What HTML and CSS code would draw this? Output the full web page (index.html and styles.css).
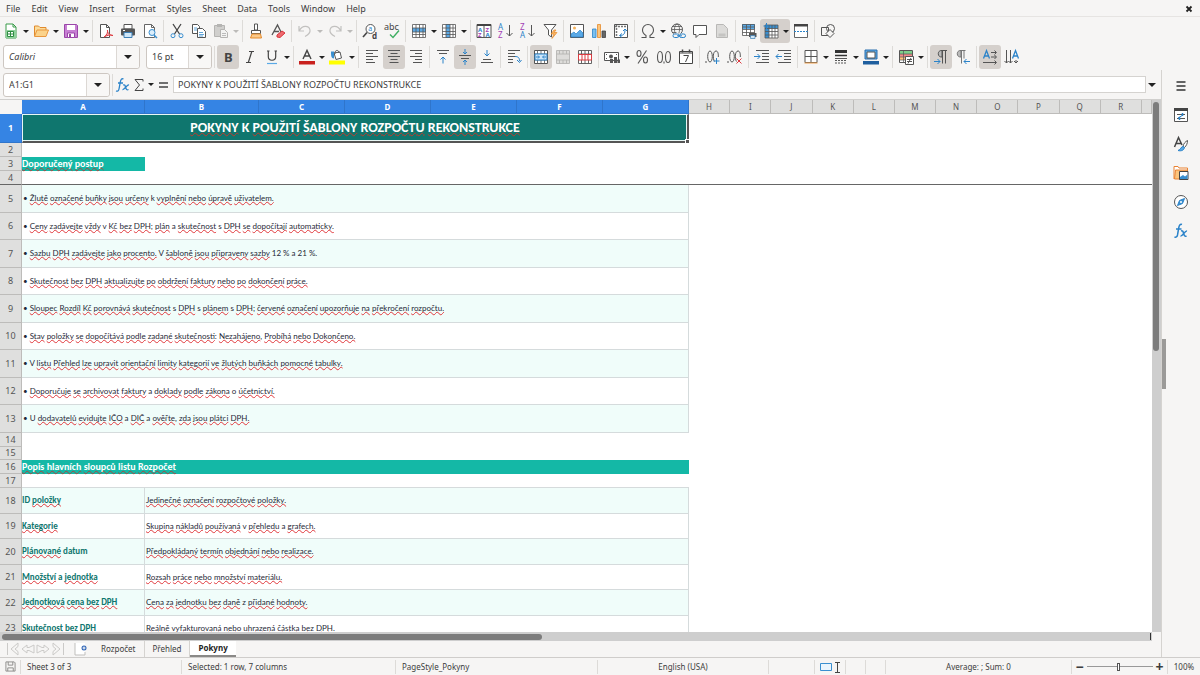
FILE: index.html
```html
<!DOCTYPE html>
<html lang="cs">
<head>
<meta charset="utf-8">
<title>Pokyny</title>
<link rel="stylesheet" href="styles.css">
</head>
<body>
<nav class="menubar">
  <button>File</button><button>Edit</button><button>View</button><button>Insert</button><button>Format</button><button>Styles</button><button>Sheet</button><button>Data</button><button>Tools</button><button>Window</button><button>Help</button>
  <button class="close" aria-label="Close document"><svg viewBox="0 0 8 8"><path d="M1.500 1.500l5 5M6.500 1.500l-5 5" stroke="#222" stroke-width="1.800"/></svg></button>
</nav>

<div class="toolbar" role="toolbar" aria-label="Standard">
  <button class="tb" aria-label="New"><svg viewBox="0 0 16 16"><path d="M3 1h7l3 3v11H3z" fill="#fff" stroke="#3a9b4a"/><path d="M10 1v3h3" fill="none" stroke="#3a9b4a"/><path d="M3 7h10v8H3z" fill="#8fd19b"/><path d="M4.500 8.500h6v5h-6zM4.500 11h6M7.500 8.500v5" fill="#fff" stroke="#2f8d42"/></svg></button><button class="dd" aria-label="New options"></button>
  <button class="tb" aria-label="Open"><svg viewBox="0 0 16 16"><path d="M1.500 13V3h4l1.500 1.500h6V7" fill="#fbdc9a" stroke="#e08a2e"/><path d="M1.500 13.500L4 7h11.500L13 13.500z" fill="#fbd38b" stroke="#e9973e"/></svg></button><button class="dd" aria-label="Open options"></button>
  <button class="tb" aria-label="Save"><svg viewBox="0 0 16 16"><path d="M1.500 1.500h12l1 1v12h-13z" fill="#c77fd3" stroke="#9a45a8"/><path d="M4 2h8v5H4z" fill="#fff"/><path d="M4.500 10h7v4.500h-7z" fill="#fff" stroke="#9a45a8"/><path d="M6 11h2v3H6z" fill="#9a45a8"/></svg></button><button class="dd" aria-label="Save options"></button>
  <i class="sep"></i>
  <button class="tb" aria-label="Export as PDF"><svg viewBox="0 0 16 16"><path d="M2.500 1.500h6l3 3v10h-9z" fill="#fff" stroke="#555"/><path d="M8.500 1.500v3h3" fill="none" stroke="#555"/><path d="M6 14c3-2 4-5 3.500-7C9 9 11 12 15 12.500c-3-.8-6-.3-9 1.500z" fill="#f4a9aa" stroke="#dd3c42"/></svg></button>
  <button class="tb" aria-label="Print"><svg viewBox="0 0 16 16"><path d="M4 1.500h8V6H4z" fill="#fff" stroke="#555"/><rect x="1" y="5.500" width="14" height="7" rx="1" fill="#555"/><path d="M4 9.500h8v5H4z" fill="#cfe6f7" stroke="#3d7fb5"/><path d="M3 7.500h2" stroke="#fff"/></svg></button>
  <button class="tb" aria-label="Print preview"><svg viewBox="0 0 16 16"><path d="M2.500 1.500h7l3 3v10h-10z" fill="#fff" stroke="#666"/><path d="M9.500 1.500v3h3" fill="none" stroke="#666"/><circle cx="10" cy="9.500" r="3" fill="#dceefb" stroke="#3a8fd0"/><path d="M12 12l3 3" stroke="#3a8fd0" stroke-width="1.500"/></svg></button>
  <i class="sep"></i>
  <button class="tb" aria-label="Cut"><svg viewBox="0 0 16 16" fill="none"><path d="M4 1l6.500 10M12 1L5.500 11" stroke="#444" stroke-width="1.300"/><circle cx="4" cy="12.700" r="2" stroke="#3a8fd0"/><circle cx="12" cy="12.700" r="2" stroke="#3a8fd0"/></svg></button>
  <button class="tb" aria-label="Copy"><svg viewBox="0 0 16 16"><path d="M1.500 1.500h5l2 2v7h-7z" fill="#fff" stroke="#555"/><path d="M6.500 5.500h5l3 3v6h-8z" fill="#fff" stroke="#555"/><path d="M3 5h3M3 7h3M8 9.500h4M8 11.500h5M8 13h4" stroke="#3a8fd0" stroke-width=".8"/></svg></button>
  <button class="tb" aria-label="Paste" disabled><svg viewBox="0 0 16 16"><path d="M1.500 2.500h10v11h-10z" fill="#d0cfcd" stroke="#b5b4b2"/><path d="M4 1h5v3H4z" fill="#b5b4b2"/><path d="M7.500 6.500h4l3 3v5h-7z" fill="#f3f3f2" stroke="#b5b4b2"/><path d="M9 10.500h4M9 12.500h4" stroke="#bbb"/></svg></button><button class="dd off" aria-label="Paste options"></button>
  <i class="sep"></i>
  <button class="tb" aria-label="Clone formatting"><svg viewBox="0 0 16 16"><path d="M6.500 1h3v6h-3z" fill="#fff" stroke="#555"/><path d="M3.500 7.500h9v3h-9z" fill="#fff" stroke="#555"/><path d="M4 11h8.500l1 4H2.500z" fill="#fbc98a" stroke="#e58a2b"/></svg></button>
  <button class="tb" aria-label="Clear formatting"><svg viewBox="0 0 16 16"><path d="M2 12L7.500 2 11 9M4 8.500h5" fill="none" stroke="#555" stroke-width="1.300"/><path d="M7 12l5-4 3 2-5 4.500-3-.5z" fill="#ee6b70" stroke="#d9343b"/></svg></button>
  <i class="sep"></i>
  <button class="tb" aria-label="Undo" disabled><svg viewBox="0 0 16 16"><path d="M2 3v5h5M2.500 7.500C5 2 12 2 13 7c.5 3-2 5-5 6.500" fill="none" stroke="#c2c1bf" stroke-width="1.200"/></svg></button><button class="dd off" aria-label="Undo list"></button>
  <button class="tb" aria-label="Redo" disabled><svg viewBox="0 0 16 16"><path d="M14 3v5H9M13.500 7.500C11 2 4 2 3 7c-.5 3 2 5 5 6.500" fill="none" stroke="#c2c1bf" stroke-width="1.200"/></svg></button><button class="dd off" aria-label="Redo list"></button>
  <i class="sep"></i>
  <button class="tb" aria-label="Find and replace"><svg viewBox="0 0 16 16"><circle cx="8.500" cy="6" r="4.500" fill="#fff" stroke="#555"/><path d="M5 9.500L1 14" stroke="#444" stroke-width="1.600"/><text x="6.300" y="8.200" font-size="7" fill="#2b83c9">a</text><text x="10" y="15.500" font-size="8" font-weight="700" fill="#444">d</text></svg></button>
  <button class="tb" aria-label="Spelling"><svg viewBox="0 0 16 16"><text x="0" y="7" font-size="9" fill="#444">abc</text><path d="M6 11.500l3 3L15 7.500" fill="none" stroke="#3fae62" stroke-width="1.400"/></svg></button>
  <i class="sep"></i>
  <button class="tb" aria-label="Row"><svg viewBox="0 0 16 16"><path d="M1 1h14v14H1z" fill="#fff"/><path d="M1 5h14v4H1z" fill="#5aa9e6"/><path d="M1.500 1.500h13v13h-13zM1.500 5h13M1.500 9h13M1.500 11.500h13M5 1.500v13M8.500 1.500v13M12 1.500v13" fill="none" stroke="#555" stroke-width=".8"/></svg></button><button class="dd" aria-label="Row options"></button>
  <button class="tb" aria-label="Column"><svg viewBox="0 0 16 16"><path d="M1 1h14v14H1z" fill="#fff"/><path d="M5 1h4v14H5z" fill="#5aa9e6"/><path d="M1.500 1.500h13v13h-13zM1.500 5h13M1.500 8.500h13M1.500 11.500h13M5 1.500v13M9 1.500v13M12 1.500v13" fill="none" stroke="#555" stroke-width=".8"/></svg></button><button class="dd" aria-label="Column options"></button>
  <i class="sep"></i>
  <button class="tb" aria-label="Sort"><svg viewBox="0 0 16 16"><path d="M1 1.500h14v13H1zM8 1.500v13" fill="#fff" stroke="#555"/><path d="M1 1h14v2H1z" fill="#444"/><g font-size="6" font-weight="700"><text x="2" y="8.500" fill="#2b83c9">A</text><text x="2" y="14" fill="#a33fb5">Z</text><text x="9.500" y="8.500" fill="#a33fb5">Z</text><text x="9.500" y="14" fill="#2b83c9">A</text></g></svg></button>
  <button class="tb" aria-label="Sort ascending"><svg viewBox="0 0 16 16"><g font-size="8"><text x="0" y="7" fill="#2b83c9">A</text><text x="0" y="15" fill="#a33fb5">Z</text></g><path d="M11.500 2v11M8.500 10l3 3 3-3" fill="none" stroke="#555"/></svg></button>
  <button class="tb" aria-label="Sort descending"><svg viewBox="0 0 16 16"><g font-size="8"><text x="0" y="7" fill="#a33fb5">Z</text><text x="0" y="15" fill="#2b83c9">A</text></g><path d="M11.500 2v11M8.500 10l3 3 3-3" fill="none" stroke="#555"/></svg></button>
  <button class="tb" aria-label="AutoFilter"><svg viewBox="0 0 16 16"><path d="M2 1.500h12L9.500 7v7L6.500 12V7z" fill="#fff" stroke="#555"/><path d="M12 7l-3 4h3l-2 4.500 5-6h-3l2-2.500z" fill="#fbb867" stroke="#e58a2b" stroke-width=".7"/></svg></button>
  <i class="sep"></i>
  <button class="tb" aria-label="Insert image"><svg viewBox="0 0 16 16"><path d="M1.500 1.500h13v13h-13z" fill="#fff" stroke="#555"/><path d="M2 14V11l3-2 2 2 4-4 3 3v4z" fill="#5aa9e6" stroke="#2b83c9" stroke-width=".7"/><circle cx="5.500" cy="5" r="1.500" fill="#f6b35c"/></svg></button>
  <button class="tb" aria-label="Insert chart"><svg viewBox="0 0 16 16"><path d="M1.500 6h3.500v8.500H1.500z" fill="#7cc0ee" stroke="#2b83c9" stroke-width=".8"/><path d="M6.500 1.500h3v13h-3z" fill="#fbc47d" stroke="#e58a2b" stroke-width=".8"/><path d="M11 8h3.500v6.500H11z" fill="#666" stroke="#444" stroke-width=".8"/></svg></button>
  <button class="tb" aria-label="Pivot table"><svg viewBox="0 0 16 16"><path d="M1.500 1.500h13v13h-13z" fill="#fff" stroke="#555"/><path d="M2 3.500h12M3.500 2v12" stroke="#777" stroke-width="1.500" stroke-dasharray="2 1"/><path d="M7 12.500c4 0 5-2 5-6M10 8l2-2 2 2M9 10.500l-2.500 2L9 14.500" fill="none" stroke="#2b83c9"/></svg></button>
  <i class="sep"></i>
  <button class="tb" aria-label="Special character"><svg viewBox="0 0 16 16"><path d="M1.500 14.500h4.500v-2C3.500 11 2.500 9.500 2.500 7a5.500 5.500 0 0 1 11 0c0 2.500-1 4-3.500 5.500v2h4.500" fill="none" stroke="#555" stroke-width="1.100"/></svg></button><button class="dd" aria-label="Special characters list"></button>
  <button class="tb" aria-label="Hyperlink"><svg viewBox="0 0 16 16" fill="none"><circle cx="7" cy="6.500" r="5.500" stroke="#555"/><ellipse cx="7" cy="6.500" rx="2.500" ry="5.500" stroke="#555" stroke-width=".8"/><path d="M1.500 6.500h11M2.500 3.500h9M2.500 9.500h4" stroke="#555" stroke-width=".8"/><path d="M3.500 10.500h11v4h-11z" fill="#f6f5f4"/><rect x="3" y="11" width="6" height="3.500" rx="1.700" stroke="#2b83c9"/><rect x="9.500" y="11" width="6" height="3.500" rx="1.700" stroke="#2b83c9"/><path d="M7 12.800h5" stroke="#2b83c9"/></svg></button>
  <button class="tb" aria-label="Comment"><svg viewBox="0 0 16 16"><path d="M1.500 2.500h13v9H7L4 14.500v-3H1.500z" fill="#fff" stroke="#555"/></svg></button>
  <button class="tb" aria-label="Headers and footers" disabled><svg viewBox="0 0 16 16"><path d="M2.500 1.500h7l4 4v9h-11z" fill="#dcdbd9" stroke="#b9b8b6"/><path d="M4.500 10.500h7v3h-7z" fill="#c5c4c2"/></svg></button>
  <i class="sep"></i>
  <button class="tb" aria-label="Print area"><svg viewBox="0 0 16 16"><path d="M1.500 1.500h12v11h-12z" fill="#fff"/><path d="M1 1h13v5H1z" fill="#5aa9e6"/><path d="M1.500 1.500h12v11h-12zM1.500 4h12M1.500 6.500h12M1.500 9.500h12M5.500 1.500v11M9.500 1.500v11" fill="none" stroke="#555" stroke-width=".8"/><path d="M8 10h7.500v4H8z" fill="#555"/><path d="M9.500 12.500h4.500v3H9.500z" fill="#cfe6f7" stroke="#3d7fb5" stroke-width=".7"/></svg></button>
  <span class="split"><button class="tb" aria-label="Freeze rows and columns"><svg viewBox="0 0 16 16"><path d="M2 2h13v13H2z" fill="#fff"/><path d="M2 2h13v3.500H2zM2 2h4v13H2z" fill="#3a8fd0"/><path d="M2 5.500h13M6 2v13M2 8.500h13M2 12h13M9 2v13M12 2v13M2 2h13v13H2z" fill="none" stroke="#555" stroke-width=".8"/><path d="M3.500 0v6M.5 3h6" stroke="#2b83c9"/></svg></button><button class="dd" aria-label="Freeze options"></button></span>
  <button class="tb" aria-label="Split window"><svg viewBox="0 0 16 16"><path d="M1.500 2.500h13v12h-13z" fill="#fff" stroke="#666"/><path d="M1 1h14v2.500H1z" fill="#444"/><path d="M1 8.500h14" stroke="#2b83c9" stroke-dasharray="2 1"/></svg></button>
  <i class="sep"></i>
  <button class="tb" aria-label="Draw functions"><svg viewBox="0 0 16 16" fill="none" stroke="#555"><path d="M1.500 4.500h7v8h-7z"/><circle cx="10.500" cy="5.500" r="4"/><path d="M10 6.500l4 4-4 4-4-4z" fill="#f6f5f4"/></svg></button>
</div>

<div class="toolbar second" role="toolbar" aria-label="Formatting">
  <div class="combo font"><input class="italic" aria-label="Font name" value="Calibri"><button class="drop" aria-label="Font list"></button></div>
  <div class="combo size"><input aria-label="Font size" value="16 pt"><button class="drop" aria-label="Size list"></button></div>
  <i class="sep"></i>
  <button class="tb on" aria-label="Bold"><svg viewBox="0 0 16 16"><text x="4" y="12.500" font-size="13" font-weight="700" fill="#444">B</text></svg></button>
  <button class="tb" aria-label="Italic"><svg viewBox="0 0 16 16"><path d="M7 2.500h5M4 13.500h5M9.800 2.500l-3.500 11" stroke="#444" stroke-width="1.200"/></svg></button>
  <button class="tb" aria-label="Underline"><svg viewBox="0 0 16 16"><path d="M3 2h2.500M10.500 2H13M4.300 2v5.500c0 5 7.400 5 7.400 0V2" fill="none" stroke="#444" stroke-width="1.200"/><path d="M3 14.500h10" stroke="#5aa9e6" stroke-width="1.200"/></svg></button><button class="dd" aria-label="Underline styles"></button>
  <i class="sep"></i>
  <button class="tb" aria-label="Font color"><svg viewBox="0 0 16 16"><path d="M4 10L8 1.500l4 8.500M5.500 7h5" fill="none" stroke="#444" stroke-width="1.400"/><path d="M0 12h16v3.500H0z" fill="#c9211e"/></svg></button><button class="dd" aria-label="Font colors"></button>
  <button class="tb" aria-label="Highlighting"><svg viewBox="0 0 16 16"><path d="M5 4l6-1 1.500 6L7 10.500z" fill="#fff" stroke="#555"/><path d="M6 5c-1-4 4-5 4-1" fill="none" stroke="#555"/><path d="M2 2.500h3v7c-3 0-3-3-3-7z" fill="#3a8fd0"/><path d="M0 11.500h16v4H0z" fill="#ffff00"/></svg></button><button class="dd" aria-label="Highlight colors"></button>
  <i class="sep"></i>
  <button class="tb" aria-label="Align left"><svg viewBox="0 0 16 16" stroke="#555" stroke-width="1.100"><path d="M2 1.500h12M2 4.500h7M2 7.500h12M2 10.500h7M2 13.500h9"/></svg></button>
  <button class="tb on" aria-label="Center horizontally"><svg viewBox="0 0 16 16" stroke="#555" stroke-width="1.100"><path d="M2 1.500h12M4.500 4.500h7M2 7.500h12M4.500 10.500h7M3.500 13.500h9"/></svg></button>
  <button class="tb" aria-label="Align right"><svg viewBox="0 0 16 16" stroke="#555" stroke-width="1.100"><path d="M2 1.500h12M7 4.500h7M2 7.500h12M7 10.500h7M5 13.500h9"/></svg></button>
  <i class="sep"></i>
  <button class="tb" aria-label="Align top"><svg viewBox="0 0 16 16" fill="none"><path d="M2 1.500h12M4 4.500h8" stroke="#555" stroke-width="1.100"/><path d="M8 14.500V8M5.500 10.500L8 8l2.500 2.500" stroke="#2b83c9"/></svg></button>
  <button class="tb on" aria-label="Center vertically"><svg viewBox="0 0 16 16" fill="none"><path d="M2 6.500h12M4 9.500h8" stroke="#555" stroke-width="1.100"/><path d="M8 0v5M6 3l2 2 2-2M8 16v-5M6 13l2-2 2 2" stroke="#2b83c9"/></svg></button>
  <button class="tb" aria-label="Align bottom"><svg viewBox="0 0 16 16" fill="none"><path d="M4 10.500h8M2 13.500h12" stroke="#555" stroke-width="1.100"/><path d="M8 1v6M5.500 4.500L8 7l2.500-2.500" stroke="#2b83c9"/></svg></button>
  <i class="sep"></i>
  <button class="tb" aria-label="Wrap text"><svg viewBox="0 0 16 16" fill="none"><path d="M2 1.500h12M2 4.500h7M2 7.500h8M2 10.500h5M2 13.500h5" stroke="#555" stroke-width="1.100"/><path d="M9 7.500c3 0 4.500 1 4.500 4.500M11 11l2.500 2.500L15.500 11" stroke="#2b83c9"/></svg></button>
  <i class="sep"></i>
  <button class="tb on" aria-label="Merge and center"><svg viewBox="0 0 16 16" fill="none"><path d="M1.500 1.500h13v13h-13z" fill="#fff" stroke="#555"/><path d="M1.500 5h13M1.500 11h13M4.500 1.500V5M8 1.500V5M11.500 1.500V5M4.500 11v3.500M8 11v3.500M11.500 11v3.500" stroke="#555" stroke-width=".8"/><path d="M2 5h12v6H2z" fill="#cde6fa" stroke="#2b83c9"/><path d="M3 8h3M10 8h3M5 6.500L6.500 8 5 9.500M11 6.500L9.500 8 11 9.500" stroke="#2b83c9"/></svg></button>
  <button class="tb" aria-label="Merge cells" disabled><svg viewBox="0 0 16 16"><path d="M1.500 1.500h13v13h-13zM1.500 5h13M1.500 11h13M4.500 1.500V5M8 1.500V5M11.500 1.500V5M4.500 11v3.500M8 11v3.500M11.500 11v3.500" fill="#dddcda" stroke="#b5b4b2" stroke-width=".9"/></svg></button>
  <button class="tb" aria-label="Split cells"><svg viewBox="0 0 16 16" fill="none"><path d="M1.500 1.500h13v13h-13zM1.500 5h13M4.500 1.500V5M8 1.500V5M11.500 1.500V5M4.500 11v3.500M8 11v3.500M11.500 11v3.500" fill="#fff" stroke="#555" stroke-width=".9"/><path d="M1.500 5.500h13v5.500h-13zM5 5v6M8 5v6M11 5v6" stroke="#dd3c42"/></svg></button>
  <i class="sep"></i>
  <button class="tb" aria-label="Currency"><svg viewBox="0 0 16 16"><path d="M.500 3.500h14v8H.500z" fill="#fff" stroke="#555"/><circle cx="7" cy="7.500" r="2" fill="#555"/><path d="M2 5.500h1M12 5.500h1M2 9.500h1" stroke="#555"/><path d="M6 10h3v4H6zM10 8h3v6h-3zM13.500 10.500H16V14h-2.500z" fill="#555"/></svg></button><button class="dd" aria-label="Currencies"></button>
  <button class="tb" aria-label="Percent"><svg viewBox="0 0 16 16" fill="none" stroke="#555" stroke-width="1.100"><ellipse cx="5" cy="4.500" rx="2" ry="3"/><ellipse cx="11.500" cy="11" rx="2" ry="3"/><path d="M12.500 1.500L4 14.500"/></svg></button>
  <button class="tb" aria-label="Number"><svg viewBox="0 0 16 16" fill="none" stroke="#555" stroke-width="1.100"><ellipse cx="4" cy="8" rx="2.500" ry="5.500"/><ellipse cx="12" cy="8" rx="2.500" ry="5.500"/><path d="M8 12.500v2"/></svg></button>
  <button class="tb" aria-label="Date"><svg viewBox="0 0 16 16" fill="none" stroke="#444"><path d="M1.500 2.500h13v12h-13zM2 4h12" fill="#fff"/><path d="M4.500.5v3M11.500.5v3" stroke-width="1.500"/><path d="M5.500 6.500h5L7.500 13"/></svg></button>
  <i class="sep"></i>
  <button class="tb" aria-label="Add decimal place"><svg viewBox="0 0 16 16" fill="none" stroke="#555"><path d="M1 12v2"/><ellipse cx="5" cy="7.500" rx="2.300" ry="5.500"/><path d="M9.500 12.500c-2-3-1.500-10.500 1.500-10.500 2 0 2.500 3 2.300 6"/><path d="M11.500 9v6M8.500 12h6" stroke="#2b83c9"/></svg></button>
  <button class="tb" aria-label="Delete decimal place"><svg viewBox="0 0 16 16" fill="none" stroke="#555"><path d="M1 12v2"/><ellipse cx="5" cy="7.500" rx="2.300" ry="5.500"/><path d="M9.500 12.500c-2-3-1.500-10.500 1.500-10.500 2 0 2.500 3 2.300 6"/><path d="M9.500 9.500l5 5M14.500 9.500l-5 5" stroke="#dd3c42"/></svg></button>
  <i class="sep"></i>
  <button class="tb" aria-label="Increase indent"><svg viewBox="0 0 16 16" fill="none"><path d="M2 1.500h13M8 4.500h7M8 7.500h7M8 10.500h7M2 13.500h13" stroke="#555" stroke-width="1.100"/><path d="M0 7.500h6M3.500 5L6 7.500 3.500 10" stroke="#2b83c9"/></svg></button>
  <button class="tb" aria-label="Decrease indent"><svg viewBox="0 0 16 16" fill="none"><path d="M2 1.500h13M8 4.500h7M8 7.500h7M8 10.500h7M2 13.500h13" stroke="#555" stroke-width="1.100"/><path d="M0 7.500h6M2.500 5L0 7.500 2.500 10" stroke="#2b83c9"/></svg></button>
  <i class="sep"></i>
  <button class="tb" aria-label="Borders"><svg viewBox="0 0 16 16"><path d="M2 1.500h12v12H2zM8 1.500v12M2 7.500h12" fill="#fff" stroke="#555"/><path d="M1.500 14h13" stroke="#f0a04b"/></svg></button><button class="dd" aria-label="Border styles"></button>
  <button class="tb" aria-label="Border style"><svg viewBox="0 0 16 16"><path d="M2 2.500h12" stroke="#333" stroke-width="3"/><path d="M2 6.500h12" stroke="#333" stroke-width="1.500"/><path d="M2 9.500h12" stroke="#555"/><path d="M2 11.500h12M2 14h12" stroke="#555" stroke-dasharray="2 1"/></svg></button><button class="dd" aria-label="Line styles"></button>
  <button class="tb" aria-label="Border color"><svg viewBox="0 0 16 16"><path d="M2 1h12v9H2z" fill="#5aa9e6" stroke="#2b6fae"/><path d="M4 3h8v6H4z" fill="#fff" stroke="#555"/><path d="M0 12h16v3.500H0z" fill="#1f5f9f"/></svg></button><button class="dd" aria-label="Border colors"></button>
  <i class="sep"></i>
  <button class="tb" aria-label="Conditional formatting"><svg viewBox="0 0 16 16"><path d="M1.500 1.500h13v12h-13z" fill="#fff" stroke="#555"/><path d="M2 2h12v3H2z" fill="#7ccf8a"/><path d="M2 5h12v3H2z" fill="#f08a8a"/><path d="M2 8h12v3H2z" fill="#fbc47d"/><path d="M5.500 1.500v12M1.500 5h13M1.500 8h13M1.500 11h13" stroke="#555" stroke-width=".7"/><path d="M7.500 7.500h8v8h-8z" fill="#fff" stroke="#555"/><path d="M9 10.500h5M9 12.500h5M13 9l-3 5.500" stroke="#444" stroke-width=".9"/></svg></button><button class="dd" aria-label="Conditional options"></button>
  <i class="sep"></i>
  <button class="tb on" aria-label="Left to right"><svg viewBox="0 0 16 16" fill="none"><path d="M8.500 1.500h5.500M9.500 1.500v13M12.500 1.500v13" stroke="#555"/><path d="M9 1.500C4 1 4 8.500 9 8z" fill="#bbb" stroke="#555"/><path d="M1 12.500h6M4.500 10L7 12.500 4.500 15" stroke="#2b83c9"/></svg></button>
  <button class="tb" aria-label="Right to left"><svg viewBox="0 0 16 16" fill="none"><path d="M5 1.500h5.500M6.500 1.500v13M9 1.500v8" stroke="#777"/><path d="M6 1.500C1 1 1 8.500 6 8z" fill="#bbb" stroke="#777"/><path d="M15 12.500H9M11.500 10L9 12.500l2.500 2.500" stroke="#2b83c9"/></svg></button>
  <i class="sep"></i>
  <button class="tb on" aria-label="Text left to right"><svg viewBox="0 0 16 16" fill="none"><path d="M1.500 9.500L4.500 1.500l3 8M2.500 7h4" stroke="#2b83c9" stroke-width="1.300"/><path d="M9 3.500h5M9 8h5M1 13.500h13M12.500 1.500l2 2-2 2M12.500 6l2 2-2 2M12.500 11.500l2 2-2 2" stroke="#555"/></svg></button>
  <button class="tb" aria-label="Text top to bottom"><svg viewBox="0 0 16 16" fill="none"><path d="M8.500 9.500l3-8 3 8M9.500 7h4" stroke="#2b83c9" stroke-width="1.300"/><path d="M2.500 1v13M6.500 1v13M.5 12l2 2 2-2M4.500 12l2 2 2-2M12 11v3M10 12l2 2 2-2" stroke="#555"/></svg></button>
</div>

<main class="work">
  <section class="doc">
    <div class="formula">
      <div class="combo name"><input aria-label="Name box" value="A1:G1"><button class="drop" aria-label="Names"></button></div>
      <i class="sep"></i>
      <button class="fb" aria-label="Function wizard"><svg viewBox="0 0 16 16" fill="none" stroke="#2b83c9" stroke-width="1.300"><path d="M8.500 2c-2-1-2.800 1-3.200 3L4 12c-.4 2-1.500 2.500-3 2M3 6h5"/><path d="M8 8c1.500-.5 2 0 2.500 2s1.200 3.500 3 2.500M14 8c-2-.5-4.500 5-6.500 4.500"/></svg></button>
      <button class="fb" aria-label="Select function"><svg viewBox="0 0 16 16" fill="none" stroke="#444"><path d="M12 4.500V2.500H4L8.500 8 4 13.500h8v-2"/></svg></button><button class="dd" aria-label="Function list"></button>
      <button class="fb" aria-label="Formula"><svg viewBox="0 0 16 16" stroke="#444" stroke-width="1.600"><path d="M4 6h9M4 10h9"/></svg></button>
      <input class="line" aria-label="Input line" value="POKYNY K POUŽITÍ ŠABLONY ROZPOČTU REKONSTRUKCE">
      <button class="drop bare" aria-label="Expand formula bar"></button>
    </div>
    <div class="view">
      <div class="clip">
        <table class="sheet">
          <colgroup><col class="cn"><col class="ca"><col class="cb"><col class="cc"><col class="cc"><col class="cc"><col class="cc"><col class="cc"><col><col><col><col><col><col><col><col><col><col><col><col class="cl"></colgroup>
          <thead><tr><th class="corner"></th><th class="sel">A</th><th class="sel">B</th><th class="sel">C</th><th class="sel">D</th><th class="sel">E</th><th class="sel">F</th><th class="sel">G</th><th>H</th><th>I</th><th>J</th><th>K</th><th>L</th><th>M</th><th>N</th><th>O</th><th>P</th><th>Q</th><th>R</th><th></th></tr></thead>
          <tbody>
            <tr class="r29"><th class="sel">1</th><td colspan="7" class="title"><u>POKYNY</u> K <u>POUŽITÍ</u> <u>ŠABLONY</u> <u>ROZPOČTU</u> <u>REKONSTRUKCE</u><i class="handle"></i></td><td colspan="12"></td></tr>
            <tr class="r14"><th>2</th><td colspan="19"></td></tr>
            <tr class="r14"><th>3</th><td class="head"><u>Doporučený</u> <u>postup</u></td><td colspan="18"></td></tr>
            <tr class="r14 freeze"><th>4</th><td colspan="19"></td></tr>
            <tr class="r28 band"><th>5</th><td colspan="7" class="cell">• <u>Žlutě</u> <u>označené</u> <u>buňky</u> <u>jsou</u> <u>určeny</u> k <u>vyplnění</u> <u>nebo</u> <u>úpravě</u> <u>uživatelem.</u></td><td colspan="12"></td></tr>
            <tr class="r27"><th>6</th><td colspan="7" class="cell">• <u>Ceny</u> <u>zadávejte</u> <u>vždy</u> v <u>Kč</u> <u>bez</u> <u>DPH</u>; <u>plán</u> a <u>skutečnost</u> s <u>DPH</u> <u>se</u> <u>dopočítají</u> <u>automaticky.</u></td><td colspan="12"></td></tr>
            <tr class="r28 band"><th>7</th><td colspan="7" class="cell">• <u>Sazbu</u> <u>DPH</u> <u>zadávejte</u> <u>jako</u> <u>procento.</u> V <u>šabloně</u> <u>jsou</u> <u>připraveny</u> <u>sazby</u> 12 % a 21 %.</td><td colspan="12"></td></tr>
            <tr class="r27"><th>8</th><td colspan="7" class="cell">• <u>Skutečnost</u> <u>bez</u> <u>DPH</u> <u>aktualizujte</u> <u>po</u> <u>obdržení</u> <u>faktury</u> <u>nebo</u> <u>po</u> <u>dokončení</u> <u>práce.</u></td><td colspan="12"></td></tr>
            <tr class="r28 band"><th>9</th><td colspan="7" class="cell">• <u>Sloupec</u> <u>Rozdíl</u> <u>Kč</u> <u>porovnává</u> <u>skutečnost</u> s <u>DPH</u> s <u>plánem</u> s <u>DPH</u>; <u>červené</u> <u>označení</u> <u>upozorňuje</u> <u>na</u> <u>překročení</u> <u>rozpočtu.</u></td><td colspan="12"></td></tr>
            <tr class="r27"><th>10</th><td colspan="7" class="cell">• <u>Stav</u> <u>položky</u> <u>se</u> <u>dopočítává</u> <u>podle</u> <u>zadané</u> <u>skutečnosti</u>: <u>Nezahájeno</u>, <u>Probíhá</u> <u>nebo</u> <u>Dokončeno.</u></td><td colspan="12"></td></tr>
            <tr class="r28 band"><th>11</th><td colspan="7" class="cell">• V <u>listu</u> <u>Přehled</u> <u>lze</u> <u>upravit</u> <u>orientační</u> <u>limity</u> <u>kategorií</u> <u>ve</u> <u>žlutých</u> <u>buňkách</u> <u>pomocné</u> <u>tabulky.</u></td><td colspan="12"></td></tr>
            <tr class="r27"><th>12</th><td colspan="7" class="cell">• <u>Doporučuje</u> <u>se</u> <u>archivovat</u> <u>faktury</u> a <u>doklady</u> <u>podle</u> <u>zákona</u> o <u>účetnictví.</u></td><td colspan="12"></td></tr>
            <tr class="r28 band"><th>13</th><td colspan="7" class="cell">• U <u>dodavatelů</u> <u>evidujte</u> <u>IČO</u> a <u>DIČ</u> a <u>ověřte</u>, <u>zda</u> <u>jsou</u> <u>plátci</u> <u>DPH.</u></td><td colspan="12"></td></tr>
            <tr class="r14"><th>14</th><td colspan="19"></td></tr>
            <tr class="r13"><th>15</th><td colspan="19"></td></tr>
            <tr class="r14"><th>16</th><td colspan="7" class="head"><u>Popis</u> <u>hlavních</u> <u>sloupců</u> <u>listu</u> <u>Rozpočet</u></td><td colspan="12"></td></tr>
            <tr class="r14 above"><th>17</th><td colspan="7"></td><td colspan="12"></td></tr>
            <tr class="r26 band"><th>18</th><td class="cell label">ID <u>položky</u></td><td colspan="6" class="cell"><u>Jedinečné</u> <u>označení</u> <u>rozpočtové</u> <u>položky.</u></td><td colspan="12"></td></tr>
            <tr class="r25"><th>19</th><td class="cell label"><u>Kategorie</u></td><td colspan="6" class="cell"><u>Skupina</u> <u>nákladů</u> <u>používaná</u> v <u>přehledu</u> a <u>grafech.</u></td><td colspan="12"></td></tr>
            <tr class="r26 band"><th>20</th><td class="cell label"><u>Plánované</u> datum</td><td colspan="6" class="cell"><u>Předpokládaný</u> <u>termín</u> <u>objednání</u> <u>nebo</u> <u>realizace.</u></td><td colspan="12"></td></tr>
            <tr class="r25"><th>21</th><td class="cell label"><u>Množství</u> a <u>jednotka</u></td><td colspan="6" class="cell"><u>Rozsah</u> <u>práce</u> <u>nebo</u> <u>množství</u> <u>materiálu.</u></td><td colspan="12"></td></tr>
            <tr class="r26 band"><th>22</th><td class="cell label"><u>Jednotková</u> <u>cena</u> <u>bez</u> <u>DPH</u></td><td colspan="6" class="cell"><u>Cena</u> <u>za</u> <u>jednotku</u> <u>bez</u> <u>daně</u> z <u>přidané</u> <u>hodnoty.</u></td><td colspan="12"></td></tr>
            <tr class="r25"><th>23</th><td class="cell label"><u>Skutečnost</u> <u>bez</u> <u>DPH</u></td><td colspan="6" class="cell"><u>Reálně</u> <u>vyfakturovaná</u> <u>nebo</u> <u>uhrazená</u> <u>částka</u> <u>bez</u> <u>DPH.</u></td><td colspan="12"></td></tr>
          </tbody>
        </table>
      </div>
      <div class="vscroll"><div class="thumb"></div></div>
    </div>
    <div class="hscroll"><div class="thumb"></div><i class="tick"></i></div>
    <div class="tabs">
      <div class="navs">
        <button aria-label="First sheet"><svg viewBox="0 0 14 14"><path d="M1.500 1v12M12 1L5 7l7 6v-3.500L9 7l3-2.500z"/></svg></button>
        <button aria-label="Previous sheet"><svg viewBox="0 0 14 14"><path d="M6 3L1 7l5 4V8.500h2L13 11V3L8 5.500H6z"/></svg></button>
        <button aria-label="Next sheet"><svg viewBox="0 0 14 14"><path d="M8 3l5 4-5 4V8.500H6L1 11V3l5 2.500h2z"/></svg></button>
        <button aria-label="Last sheet"><svg viewBox="0 0 14 14"><path d="M12.500 1v12M2 1l7 6-7 6V9.500L5 7 2 4.500z"/></svg></button>
      </div>
      <button class="add" aria-label="Add sheet"><svg viewBox="0 0 14 14"><path d="M1 1h10v12H1z" fill="#fff"/><path d="M1 1v12h10v-3" fill="none" stroke="#c0bfbd"/><circle cx="10" cy="6" r="2.500" fill="#2f64b5"/><path d="M10 4.500v3M8.500 6h3" stroke="#fff"/></svg></button>
      <button class="tab">Rozpočet</button><button class="tab">Přehled</button><button class="tab active">Pokyny</button>
    </div>
  </section>
  <div class="grip" role="separator"><i></i></div>
  <aside class="sidebar">
    <button aria-label="Sidebar settings"><svg viewBox="0 0 16 16" stroke="#333" stroke-width="1.500"><path d="M3.500 4h9M3.500 8h9M3.500 12h9"/></svg></button>
    <button aria-label="Properties"><svg viewBox="0 0 16 16"><path d="M1.500 2.500h13v12h-13z" fill="#fff" stroke="#555"/><path d="M1 1h14v3H1z" fill="#444"/><path d="M4 7.500h8M4 11.500h8" stroke="#555"/><path d="M9.500 6v3M6.500 10v3" stroke="#2b83c9" stroke-width="1.500"/><path d="M5 11l5-3" stroke="#2b83c9"/></svg></button>
    <button aria-label="Styles"><svg viewBox="0 0 16 16" fill="none"><path d="M1.500 11L5.500 1.500 9 9M3 7.500h5" stroke="#444" stroke-width="1.500"/><path d="M14.500 4.500c-2 1-4 3-4.500 6l1.500 1c2-2 3-4 3-7z" fill="#fff" stroke="#555"/><path d="M10 10.500c-2 0-2 3-5 4 3 .8 6 0 6.500-3z" fill="#5aa9e6" stroke="#2b83c9"/></svg></button>
    <button aria-label="Gallery"><svg viewBox="0 0 16 16"><path d="M1 14V1.500h4l1 1.500h8.500v3" fill="#fff" stroke="#e98233"/><path d="M1.500 14l1-9h12v9z" fill="#fbc47d" stroke="#e98233"/><path d="M6.500 6.500h8.500v8H6.500z" fill="#fff" stroke="#444"/><path d="M7 14v-2l3-2 2 1.500 2.500-2V14z" fill="#3a8fd0"/></svg></button>
    <button aria-label="Navigator"><svg viewBox="0 0 16 16"><circle cx="8" cy="8" r="6.500" fill="#fff" stroke="#555"/><path d="M11.500 4.500l-2 5-5 2 2-5z" fill="#3a8fd0" stroke="#2b83c9"/><circle cx="8" cy="8" r="1" fill="#fff"/></svg></button>
    <button aria-label="Functions"><svg viewBox="0 0 16 16" fill="none" stroke="#2b83c9" stroke-width="1.500"><path d="M9 1.500C7 .8 6.200 2.500 5.800 4.500L4.500 12c-.4 2-1.500 2.500-3 2M3 6h5.500"/><path d="M8 8c1.500-.5 2 0 2.500 2s1.200 4 3 3M14 8c-2-.5-4.500 5.500-6.500 5"/></svg></button>
  </aside>
</main>

<footer class="status">
  <span class="s-save"><svg viewBox="0 0 12 12" fill="none" stroke="#8a8987"><path d="M1 1h9l1 1v9H1zM3.500 1v3.500h5V1M3 11V7.500h6V11"/></svg></span>
  <span class="s-sheet">Sheet 3 of 3</span>
  <span class="s-sel">Selected: 1 row, 7 columns</span>
  <span class="s-style">PageStyle_Pokyny</span>
  <span class="s-lang">English (USA)</span>
  <span class="s-gap"></span>
  <span class="s-mode"><svg viewBox="0 0 20 12" fill="none"><path d="M.5 2.500h11v7H.5z" fill="#eaf5fd" stroke="#3a8fd0"/><path d="M15 1.500h5M15 11.500h5M17.500 1.500v10" stroke="#444"/></svg></span>
  <span class="s-box"></span><span class="s-box"></span>
  <span class="s-sum">Average: ; Sum: 0</span>
  <span class="s-zoom"><button aria-label="Zoom out">−</button><input type="range" aria-label="Zoom" min="0" max="100" value="49"><button aria-label="Zoom in">+</button></span>
  <span class="s-pct">100%</span>
</footer>
</body>
</html>
```
FILE: styles.css
```css
* { box-sizing: border-box; }

body {
  margin: 0;
  height: 100vh;
  display: flex;
  flex-direction: column;
  overflow: hidden;
  background: #f6f5f4;
  color: #3d3d3d;
  font: 9px/12px "Noto Sans", sans-serif;
}

button, input {
  margin: 0;
  padding: 0;
  border: 0;
  background: none;
  color: inherit;
  font: inherit;
}
svg { display: block; overflow: visible; }
svg text { font-family: "Noto Sans", sans-serif; }

/* menu */
.menubar {
  display: flex;
  flex: none;
  height: 17px;
  padding: 0 7px 0 6px;
  gap: 11px;
  margin-bottom: 1px;
  box-shadow: inset 0 -1px #e6e4e2;
}
.menubar .close { margin-left: auto; }
.close svg { width: 8px; height: 8px; }

/* toolbars */
.toolbar {
  display: flex;
  flex: none;
  align-items: center;
  height: 26px;
}
.toolbar.second { padding-left: 3px; }
.tb {
  flex: none;
  width: 22px;
  height: 24px;
  display: grid;
  place-items: center;
  border-radius: 3px;
}
.tb svg, .fb svg { width: 16px; height: 16px; }
.on, .split { background: #d5d0cc; }
.split { display: flex; border-radius: 3px; }
.dd {
  flex: none;
  width: 8px;
  height: 24px;
  display: grid;
  place-items: center;
}
.dd::before, .drop::before {
  content: "";
  border: 3px solid transparent;
  border-top-color: #222;
  border-bottom: 0;
}
.dd.off::before { border-top-color: #bcbbb9; }
.sep {
  flex: none;
  width: 1px;
  height: 22px;
  margin: 0 2px;
  background: #dddbd8;
}

.combo {
  flex: none;
  display: flex;
  height: 24px;
  border: 1px solid #cdc7c2;
  border-radius: 3px;
  background: #fff;
}
.combo input { flex: 1; min-width: 0; padding-left: 5px; }
.combo .drop {
  flex: none;
  width: 23px;
  border-left: 1px solid #dcd8d4;
  background: #f8f7f6;
  border-radius: 0 3px 3px 0;
}
.drop { display: grid; place-items: center; }
.drop::before { border-width: 4px; border-bottom: 0; }
.italic { font-style: italic; }
.combo.font { width: 137px; margin-right: 6px; }
.combo.size { width: 66px; }
.combo.name { width: 107px; }

/* work area */
.work { flex: 1; min-height: 0; display: flex; }
.doc { flex: 1; min-width: 0; display: flex; flex-direction: column; }
.formula {
  flex: none;
  display: flex;
  align-items: center;
  height: 29px;
  padding: 0 5px 0 3px;
}
.fb { flex: none; width: 16px; height: 20px; display: grid; place-items: center; }
.line {
  flex: 1;
  min-width: 0;
  height: 17px;
  margin: 0 2px;
  padding: 0 4px;
  border: 1px solid #d5d3d0;
  background: #fff;
}
.bare { flex: none; width: 8px; }

.view { flex: 1; min-height: 0; display: flex; border-top: 1px solid #d0cfcd; }
.clip { flex: 1; min-width: 0; overflow: hidden; background: #fff; }
.sheet {
  width: 100%;
  table-layout: fixed;
  border-spacing: 0;
}
.cn { width: 22px; }
.ca { width: 123px; }
.cb { width: 114px; }
.cc { width: 86px; }
.cl { width: 10px; }
.sheet th, .sheet td { padding: 0; line-height: 12px; white-space: nowrap; }
.sheet th {
  background: #dfdfde;
  border-right: 1px solid #bdbcba;
  border-bottom: 1px solid #bdbcba;
  color: #555;
  font-weight: 400;
}
.sheet thead th { height: 14px; font-size: 8px; }
.sheet .corner { background: #f6f5f4; border-color: #f6f5f4; }
.sheet th.sel {
  background: #3584e4;
  border-color: #2f75cb;
  color: #fff;
  font-weight: 700;
}
.sheet td {
  font-family: Lato, "Noto Sans", sans-serif;
  font-size: 8px;
  color: #1f2937;
}
.sheet u {
  text-decoration: underline wavy #e0383c 1px;
  text-underline-offset: 0;
  text-decoration-skip-ink: none;
}
.r13 { height: 13px; }
.r14 { height: 14px; }
.r25 { height: 25px; }
.r26 { height: 26px; }
.r27 { height: 27px; }
.r28 { height: 28px; }
.r29 { height: 29px; }

.sheet .title, .sheet .head, .sheet .label {
  font-family: Calibri, Carlito, Lato, sans-serif;
  font-weight: 700;
}
.sheet .title {
  position: relative;
  border: 1px solid #e8f7f5;
  border-bottom: 2px solid #555;
  border-right: 2px solid #555;
  box-shadow: inset -1px -1px #e8f7f5;
  background: #0f766e;
  color: #fff;
  font-size: 14px;
  text-align: center;
}
.title u { text-decoration-color: #c0392b; }
.handle {
  position: absolute;
  right: -3px;
  bottom: -3px;
  width: 5px;
  height: 5px;
  border: 1px solid #fff;
  background: #555;
}
.sheet .head { background: #14b8a6; color: #fff; font-size: 10px; }
.head u { text-decoration-color: #a8453f; }
.sheet .freeze th, .sheet .freeze td { border-bottom: 1px solid #666; }
.sheet .cell {
  padding: 0 0 1px 1px;
  border-right: 1px solid #d5dbdc;
  border-bottom: 1px solid #d5dbdc;
}
.above td:nth-child(2) { border-bottom: 1px solid #d5dbdc; }
.band .cell { background: #f0fdfa; }
.sheet .label { color: #0f766e; padding-left: 0; font-size: 9px; }

.vscroll { flex: none; width: 9px; padding: 2px 2px 0 1px; background: #cecece; }
.vscroll .thumb { height: 47%; border-radius: 3px; background: #7c7c7c; }
.hscroll {
  flex: none;
  display: flex;
  align-items: center;
  justify-content: space-between;
  height: 9px;
  margin-right: 9px;
  padding: 0 1px 0 2px;
  background: #cecece;
}
.hscroll .thumb { width: 47%; height: 6px; border-radius: 3px; background: #7c7c7c; }
.tick { width: 1px; height: 7px; background: #333; }

.tabs { flex: none; display: flex; height: 16px; padding-left: 6px; }
.navs { display: flex; gap: 1px; align-items: center; margin-right: 9px; }
.navs svg { width: 14px; height: 14px; fill: none; stroke: #cbcac8; }
.add { width: 16px; margin-right: 3px; }
.add svg { width: 14px; height: 14px; }
.tab { padding: 0 8px; border-right: 1px solid #d5d3d0; font-size: 8px; }
.tab.active {
  border-right: 0;
  border-bottom: 2px solid #8a8987;
  background: #fff;
  color: #222;
  font-weight: 700;
}

.grip {
  flex: none;
  width: 5px;
  display: flex;
  align-items: center;
  border-left: 1px solid #d5d3d0;
}
.grip i { width: 4px; height: 50px; background: #9b9a98; }
.sidebar {
  flex: none;
  width: 34px;
  display: flex;
  flex-direction: column;
  gap: 13px;
  padding: 8px 0 0 7px;
}
.sidebar button { width: 16px; height: 16px; }
.sidebar svg { width: 16px; height: 16px; }

/* status bar */
.status {
  flex: none;
  display: flex;
  align-items: center;
  height: 18px;
  border-top: 1px solid #cfcdcb;
  font-size: 8px;
}
.status > span {
  flex: none;
  height: 14px;
  display: flex;
  align-items: center;
  justify-content: center;
  border-right: 1px solid #dddbd8;
}
.status .s-save { width: 21px; }
.s-save svg { width: 11px; height: 11px; }
.status .s-sheet { width: 161px; justify-content: flex-start; padding-left: 6px; }
.status .s-sel { flex: 1 1 110px; justify-content: flex-start; padding-left: 6px; }
.status .s-style { flex: 1 1 98px; justify-content: flex-start; padding-left: 6px; }
.status .s-lang { width: 171px; }
.status .s-gap { width: 46px; }
.status .s-mode { width: 31px; }
.s-mode svg { width: 20px; height: 12px; }
.status .s-box { width: 20px; }
.status .s-sum { width: 186px; }
.status .s-zoom { width: 96px; gap: 2px; }
.s-zoom button { width: 10px; font-size: 14px; font-weight: 700; }
.s-zoom input {
  width: 66px;
  height: 10px;
  appearance: none;
  background: linear-gradient(#999, #999) center / 100% 1px no-repeat;
}
.s-zoom input::-webkit-slider-thumb {
  appearance: none;
  width: 3px;
  height: 8px;
  border: 1px solid #555;
  background: #fff;
}
.status .s-pct { width: 32px; border: 0; }
```
